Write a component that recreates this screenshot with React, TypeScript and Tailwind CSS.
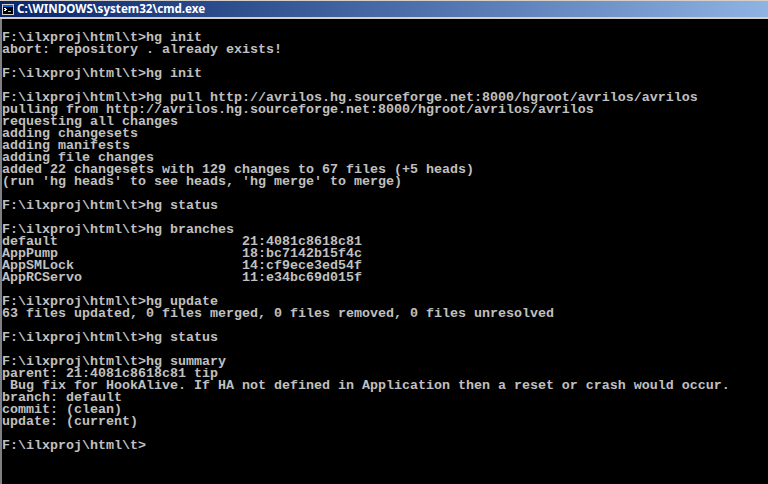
const LINES = [
  "F:\\ilxproj\\html\\t>hg init",
  "abort: repository . already exists!",
  "",
  "F:\\ilxproj\\html\\t>hg init",
  "",
  "F:\\ilxproj\\html\\t>hg pull http://avrilos.hg.sourceforge.net:8000/hgroot/avrilos/avrilos",
  "pulling from http://avrilos.hg.sourceforge.net:8000/hgroot/avrilos/avrilos",
  "requesting all changes",
  "adding changesets",
  "adding manifests",
  "adding file changes",
  "added 22 changesets with 129 changes to 67 files (+5 heads)",
  "(run 'hg heads' to see heads, 'hg merge' to merge)",
  "",
  "F:\\ilxproj\\html\\t>hg status",
  "",
  "F:\\ilxproj\\html\\t>hg branches",
  "default                       21:4081c8618c81",
  "AppPump                       18:bc7142b15f4c",
  "AppSMLock                     14:cf9ece3ed54f",
  "AppRCServo                    11:e34bc69d015f",
  "",
  "F:\\ilxproj\\html\\t>hg update",
  "63 files updated, 0 files merged, 0 files removed, 0 files unresolved",
  "",
  "F:\\ilxproj\\html\\t>hg status",
  "",
  "F:\\ilxproj\\html\\t>hg summary",
  "parent: 21:4081c8618c81 tip",
  " Bug fix for HookAlive. If HA not defined in Application then a reset or crash would occur.",
  "branch: default",
  "commit: (clean)",
  "update: (current)",
  "",
  "F:\\ilxproj\\html\\t>",
];

export default function App() {
  return (
    <div className="flex h-[484px] w-[768px] flex-col overflow-hidden bg-black">
      <div className="flex h-[17px] shrink-0 items-center gap-[3px] border-t border-[#d4d0c8] bg-gradient-to-r from-[#0a246a] to-[#8fb3e3] pl-[2px]">
        <svg width="12" height="11" viewBox="0 0 12 11" className="shrink-0">
          <rect x="0" y="0" width="12" height="11" fill="#d4d0c8" />
          <rect x="1" y="1" width="10" height="2" fill="#1060d0" />
          <rect x="1" y="3" width="10" height="7" fill="#000" />
          <rect x="2" y="4" width="2" height="1" fill="#fff" />
          <rect x="3" y="5" width="2" height="1" fill="#fff" />
          <rect x="2" y="6" width="2" height="1" fill="#fff" />
          <rect x="6" y="7" width="3" height="1" fill="#c0c0c0" />
        </svg>
        <span className="whitespace-pre font-['Noto_Sans','Liberation_Sans',sans-serif] text-[11.6px] font-bold leading-none text-white">
          C:\WINDOWS\system32\cmd.exe
        </span>
      </div>
      <div className="h-[2px] shrink-0 bg-[#d4d0c8]" />
      <div className="flex-1 border-l-2 border-[#808080] pt-[13px]">
        {LINES.map((line, i) => (
          <div
            key={i}
            className="h-[12px] whitespace-pre font-['Liberation_Mono','Courier_New',monospace] text-[13.33px] font-bold leading-[12px] text-[#c0c0c0]"
          >
            {line}
          </div>
        ))}
      </div>
    </div>
  );
}
